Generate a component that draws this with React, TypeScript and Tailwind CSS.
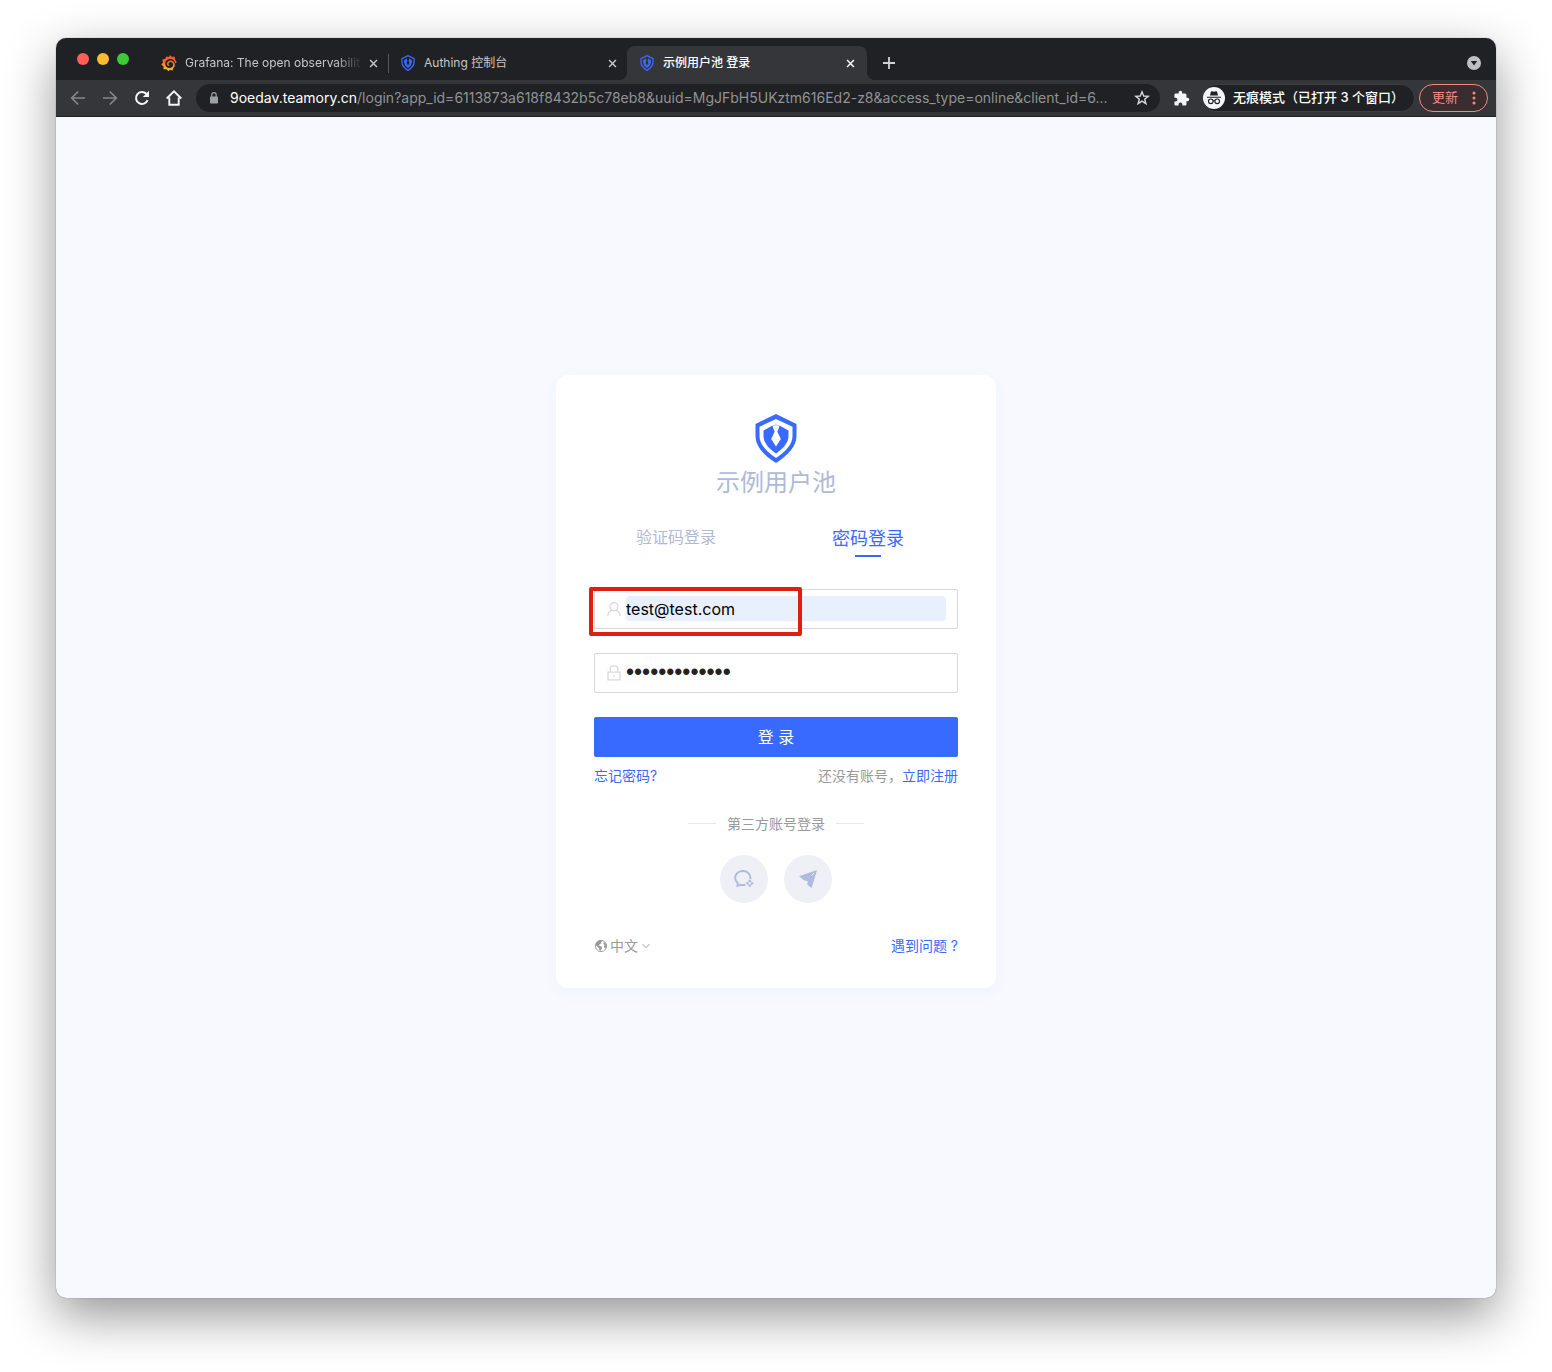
import React from "react";

function Shield({ className }: { className: string }) {
  return (
    <svg viewBox="0 0 42 49" className={className} aria-hidden="true">
      <path d="M21 0 41.500 10V22C41.500 32 33.500 41 21 49 8.500 41 .5 32 .5 22V10Z" fill="#396aff" />
      <path d="M21 5 37.500 12.800V22C37.500 30 31 37.500 21 44 11 37.500 4.500 30 4.500 22V12.800Z" fill="#fff" />
      <path d="M17.600 11.500 8.500 16.500V22C8.500 28.500 13.500 34.500 21 39.500 28.500 34.500 33.500 28.500 33.500 22V16.500L24.400 11.500Z" fill="#396aff" />
      <path d="M17.300 10.800a6 6 0 0 1 7.400 0L23.400 15.500 22.300 17.500 25.800 25 21 32.500 16.200 25 19.700 17.500 18.600 15.500Z" fill="#fff" />
      <path d="M18 11.900Q21 9.600 24 11.900" fill="none" stroke="#9db5ff" strokeWidth="0.800" />
    </svg>
  );
}

function ShieldSmall() {
  return (
    <svg viewBox="0 0 42 49" className="h-4 w-3.5 shrink-0" aria-hidden="true">
      <path d="M21 2 39.500 11V22C39.500 31 32.500 39.500 21 47 9.500 39.500 2.500 31 2.500 22V11Z" fill="none" stroke="#396aff" strokeWidth="4" />
      <path d="M17 11 9 16V22C9 28.500 14 34.500 21 39.500 28 34.500 33 28.500 33 22V16L25 11 23 17 25.500 25 21 32 16.500 25 19 17Z" fill="#396aff" />
    </svg>
  );
}

function GrafanaIcon() {
  return (
    <svg viewBox="0 0 32 32" className="size-4 shrink-0" aria-hidden="true">
      <defs>
        <linearGradient id="grafana" x1="0" y1="0" x2="0" y2="1">
          <stop offset="0" stopColor="#f0512b" />
          <stop offset="0.450" stopColor="#f4702a" />
          <stop offset="1" stopColor="#fcc827" />
        </linearGradient>
      </defs>
      <path
        fill="url(#grafana)"
        d="M18 0 21.500 3.500 27.500 3.500 28 9 31.500 14 29 17A10 10 0 0 0 18.500 8.200C12.500 8.200 8.500 12.500 8.500 17.500 8.500 22.800 12.500 26.200 17 26.200 21.500 26.200 24.300 23 24.300 19.500 24.300 16 21.800 14 19.200 14 16.800 14 15 15.800 15 17.800 15 19.500 16.200 20.500 17.600 20.700 16 22.800 12 21.500 12 17.600 12 13.800 15.200 11 19.200 11 23.800 11 27.600 14.600 27.600 19.600 27.600 23 26 25.500 24 27.200L23.500 31 18.500 29.500 14.500 32 11 28.300 5 28.500 5 23 .5 19 4 15 2.500 9 8 8 11 3 15.500 4.200Z"
      />
    </svg>
  );
}

function Cross({ className }: { className: string }) {
  return (
    <svg viewBox="0 0 10 10" className={className} aria-hidden="true">
      <path d="M1.200 1.200 8.800 8.800M8.800 1.200 1.200 8.800" stroke="currentColor" strokeWidth="1.600" />
    </svg>
  );
}

function Tab({ icon, title, active = false, first = false }: { icon: React.ReactNode; title: string; active?: boolean; first?: boolean }) {
  return (
    <div
      className={
        active
          ? "relative flex h-[34px] w-60 items-center rounded-t-lg bg-[#35363a] pr-2.5 pl-[13px] text-white"
          : "relative flex h-[34px] w-[239px] items-center pr-2 pl-3 text-[#c6c8cb]"
      }
    >
      {icon}
      <button
        type="button"
        className={
          active
            ? "ml-[9px] min-w-0 flex-1 text-left text-xs font-medium whitespace-nowrap"
            : first
              ? "ml-2 min-w-0 flex-1 [mask-image:linear-gradient(to_right,black_84%,transparent)] text-left text-xs whitespace-nowrap"
              : "ml-2 min-w-0 flex-1 text-left text-xs whitespace-nowrap"
        }
      >
        {title}
      </button>
      <button type="button" aria-label="关闭标签页" className="ml-1 p-0.5">
        <Cross className="size-[9px]" />
      </button>
      {first && <span className="absolute top-2 -right-px h-[19px] w-px bg-[#55575b]" />}
      {active && (
        <>
          <span className="absolute bottom-0 -left-2 size-2 bg-[radial-gradient(circle_at_0_0,transparent_8px,#35363a_8px)]" />
          <span className="absolute -right-2 bottom-0 size-2 bg-[radial-gradient(circle_at_100%_0,transparent_8px,#35363a_8px)]" />
        </>
      )}
    </div>
  );
}

function NavButton({ label, children, dim = false }: { label: string; children: React.ReactNode; dim?: boolean }) {
  return (
    <button
      type="button"
      aria-label={label}
      className={dim ? "flex size-8 items-center justify-center text-[#84868a]" : "flex size-8 items-center justify-center text-[#f4f5f6]"}
    >
      <svg viewBox="0 0 20 20" className="size-5" fill="none" stroke="currentColor" strokeWidth="2" aria-hidden="true">
        {children}
      </svg>
    </button>
  );
}

function BrowserChrome() {
  return (
    <header>
      <div className="flex h-[42px] items-end bg-[#202124]">
        <div className="flex gap-2 self-center pl-[21px]">
          <button type="button" aria-label="关闭" className="size-3 rounded-full bg-[#ff5f57]" />
          <button type="button" aria-label="最小化" className="size-3 rounded-full bg-[#febc2e]" />
          <button type="button" aria-label="缩放" className="size-3 rounded-full bg-[#3ec93b]" />
        </div>
        <div className="ml-5 flex">
          <Tab first icon={<GrafanaIcon />} title="Grafana: The open observabilit" />
          <Tab icon={<span className="flex w-4 justify-center"><ShieldSmall /></span>} title="Authing 控制台" />
          <Tab active icon={<span className="flex w-3.5 justify-center"><ShieldSmall /></span>} title="示例用户池 登录" />
        </div>
        <button type="button" aria-label="新标签页" className="ml-4 flex h-[34px] items-center text-[#d0d2d5]">
          <svg viewBox="0 0 12 12" className="size-3" aria-hidden="true">
            <path d="M6 0V12M0 6H12" stroke="currentColor" strokeWidth="1.800" />
          </svg>
        </button>
        <button type="button" aria-label="搜索标签页" className="mr-[15px] ml-auto flex h-[34px] items-center">
          <svg viewBox="0 0 14 14" className="size-3.5" aria-hidden="true">
            <circle cx="7" cy="7" r="7" fill="#bdc1c6" />
            <path d="M3.800 5H10.200L7 9.500Z" fill="#202124" />
          </svg>
        </button>
      </div>
      <div className="flex h-[37px] items-center border-b border-[#202124] bg-[#35363a] pr-2 pl-1.5">
        <NavButton label="后退" dim>
          <path d="M17 10H4M10.200 3.500 3.700 10l6.500 6.500" strokeWidth="1.700" />
        </NavButton>
        <NavButton label="前进" dim>
          <path d="M3 10H16M9.800 3.500 16.300 10l-6.500 6.500" strokeWidth="1.700" />
        </NavButton>
        <NavButton label="重新加载">
          <path d="M15.600 12.200A6 6 0 1 1 14.300 5.800L16 7.500" />
          <path d="M17 2.800V9H10.800Z" fill="currentColor" stroke="none" />
        </NavButton>
        <NavButton label="主页">
          <path d="M2.700 10.500 10 3.300l7.300 7.200M5.300 9.500V16.800H14.700V9.500" strokeWidth="1.900" />
        </NavButton>
        <div className="ml-1.5 flex h-7 min-w-0 flex-1 items-center rounded-full bg-[#202124] pr-2.5 pl-3.5">
          <svg viewBox="0 0 8 12" className="h-3 w-2 shrink-0" aria-hidden="true">
            <rect x="0" y="4.500" width="8" height="7" rx="0.800" fill="#9aa0a6" />
            <path d="M1.800 5V2.900a2.200 2.200 0 0 1 4.400 0V5" fill="none" stroke="#9aa0a6" strokeWidth="1.200" />
          </svg>
          <p className="ml-3 min-w-0 flex-1 truncate text-sm text-[#919396]">
            <span className="text-white">9oedav.teamory.cn</span>
            /login?app_id=6113873a618f8432b5c78eb8&amp;uuid=MgJFbH5UKztm616Ed2-z8&amp;access_type=online&amp;client_id=6...
          </p>
          <button type="button" aria-label="为此标签页添加书签" className="ml-3 shrink-0">
            <svg viewBox="0 0 16 16" className="size-4" fill="none" stroke="#d5d7da" strokeWidth="1.400" aria-hidden="true">
              <path d="M8 1.800 9.700 6 14.200 6.300 10.700 9.200 11.900 13.700 8 11.200 4.100 13.700 5.300 9.200 1.800 6.300 6.300 6Z" />
            </svg>
          </button>
        </div>
        <button type="button" aria-label="扩展程序" className="flex w-[42px] shrink-0 items-center justify-center pl-px">
          <svg viewBox="0 0 24 24" className="size-[17px]" fill="#f4f5f6" aria-hidden="true">
            <path d="M20.500 11H19V7a2 2 0 0 0-2-2h-4V3.500a2.500 2.500 0 0 0-5 0V5H4a2 2 0 0 0-2 2v3.800h1.500a2.700 2.700 0 0 1 0 5.400H2V20a2 2 0 0 0 2 2h3.800v-1.500a2.700 2.700 0 0 1 5.400 0V22H17a2 2 0 0 0 2-2v-4h1.500a2.500 2.500 0 0 0 0-5Z" />
          </svg>
        </button>
        <div className="flex h-7 w-[213px] shrink-0 items-center rounded-full border border-[#3d3e42] bg-[#202124] text-[13px] font-medium whitespace-nowrap text-white">
          <svg viewBox="0 0 22 22" className="size-[22px] shrink-0" aria-hidden="true">
            <circle cx="11" cy="11" r="11" fill="#f4f5f6" />
            <path d="M7 8.500 7.900 4.700Q8.200 4 9 4.300L11 4.800 13 4.300Q13.800 4 14.100 4.700L15 8.500ZM4 9.700H18V10.800H4Z" fill="#202124" />
            <g fill="none" stroke="#202124" strokeWidth="1.100">
              <circle cx="7.800" cy="14.300" r="2.300" />
              <circle cx="14.200" cy="14.300" r="2.300" />
              <path d="M10.100 14Q11 13.300 11.900 14" />
            </g>
          </svg>
          <span className="ml-2">无痕模式（已打开 3 个窗口）</span>
        </div>
        <button
          type="button"
          className="ml-1 flex h-7 w-[69px] shrink-0 items-center justify-between rounded-full border border-[#f28b82] bg-[#3a2d30] pr-[11px] pl-3 text-[13px] text-[#f28b82]"
        >
          更新
          <svg viewBox="0 0 4 14" className="h-3.5 w-1" fill="currentColor" aria-hidden="true">
            <circle cx="2" cy="2" r="1.500" />
            <circle cx="2" cy="7" r="1.500" />
            <circle cx="2" cy="12" r="1.500" />
          </svg>
        </button>
      </div>
    </header>
  );
}

function LoginCard() {
  return (
    <section className="w-full max-w-[440px] rounded-xl bg-white px-[38px] pt-[39px] pb-8 shadow-[0_4px_16px_rgba(57,106,255,0.04)]">
      <Shield className="mx-auto h-[49px] w-[42px]" />
      <h1 className="text-center text-2xl leading-10 font-normal text-[#afbad7]">示例用户池</h1>
      <div role="tablist" className="mt-5 flex items-start justify-between pr-[54px] pl-[42px]">
        <button type="button" role="tab" aria-selected="false" className="text-base leading-7 text-[#afbad7]">
          验证码登录
        </button>
        <button type="button" role="tab" aria-selected="true" className="flex flex-col items-center text-lg leading-8 text-[#396aff]">
          密码登录
          <span className="h-0.5 w-[26px] bg-[#396aff]" />
        </button>
      </div>
      <form className="mt-8" onSubmit={(e) => e.preventDefault()}>
        <div className="relative flex h-10 items-center rounded-[2px] border border-[#d9d9d9] pr-[11px] pl-3">
          <svg viewBox="0 0 14 14" className="size-3.5 shrink-0" fill="none" stroke="#d9d9d9" strokeWidth="1.300" aria-hidden="true">
            <circle cx="7" cy="4.600" r="4" />
            <path d="M.8 13.800C1 10.500 3 8.800 5 8.200M13.200 13.800C13 10.500 11 8.800 9 8.200" />
          </svg>
          <input
            type="text"
            aria-label="账号"
            defaultValue="test@test.com"
            className="ml-[5px] h-[25px] min-w-0 flex-1 rounded bg-[#e8f0fe] text-base text-black outline-none"
          />
          <span className="pointer-events-none absolute -top-[3px] -left-1.5 h-[49px] w-[213px] rounded-[2px] border-4 border-[#e01e10]" />
        </div>
        <div className="mt-6 flex h-10 items-center rounded-[2px] border border-[#d9d9d9] pr-[11px] pl-3">
          <svg viewBox="0 0 14 16" className="h-4 w-3.5 shrink-0" fill="none" stroke="#d9d9d9" strokeWidth="1.300" aria-hidden="true">
            <path d="M1 7.200H13V14.800H1ZM3.300 7V3.500Q3.300 1.200 5.500 1.200H8.500Q10.700 1.200 10.700 3.500V7M7 9.800V12" />
          </svg>
          <input
            type="password"
            aria-label="密码"
            defaultValue="1234567890123"
            className="ml-[5px] h-[25px] min-w-0 flex-1 font-['Liberation_Sans',sans-serif] text-[23px] text-[#222] outline-none"
          />
        </div>
        <button type="submit" className="mt-6 h-10 w-full rounded-[2px] bg-[#396aff] text-base text-white">
          登 录
        </button>
        <div className="mt-[9px] flex justify-between text-sm leading-5">
          <a href="#forgot" className="text-[#396aff]">忘记密码?</a>
          <p className="text-[#999]">
            还没有账号，<a href="#register" className="text-[#396aff]">立即注册</a>
          </p>
        </div>
      </form>
      <div className="mt-7 flex items-center justify-center gap-[11px] text-sm leading-5 text-[#999]">
        <span className="h-px w-7 bg-[#e8e8e8]" />
        第三方账号登录
        <span className="h-px w-7 bg-[#e8e8e8]" />
      </div>
      <div className="mt-[21px] flex justify-center gap-4">
        <button type="button" aria-label="企业微信登录" className="flex size-12 items-center justify-center rounded-full bg-[#eff0f5]">
          <svg viewBox="0 0 20 18" className="h-[18px] w-5" fill="none" stroke="#afbbdc" aria-hidden="true">
            <path d="M16.300 9A7.600 6.900 0 1 0 3.700 13L3.500 15.900 6.600 14.800Q8.500 15.300 11.500 14.800" strokeWidth="1.900" />
            <path d="M15.800 9.500Q16.300 12.500 19.400 13.200 16.300 13.900 15.800 17 15.200 13.900 12.200 13.200 15.200 12.500 15.800 9.500Z" strokeWidth="1.200" />
          </svg>
        </button>
        <button type="button" aria-label="飞书登录" className="flex size-12 items-center justify-center rounded-full bg-[#eff0f5]">
          <svg viewBox="0 0 18 18" className="size-[18px]" aria-hidden="true">
            <path d="M0 6.200 18 0 12.700 18 8.300 14.700 8.600 10.900 5.300 10.500Z" fill="#afbbdc" />
            <path d="M12.300 5.600 15 3" stroke="#eff0f5" strokeWidth="1" />
          </svg>
        </button>
      </div>
      <footer className="mt-[33px] flex items-center justify-between text-sm leading-5">
        <button type="button" className="flex items-center text-[#999]">
          <svg viewBox="0 0 14 14" className="mr-0.5 size-3.5" aria-hidden="true">
            <circle cx="7" cy="7" r="5.600" fill="none" stroke="#999" strokeWidth="0.900" />
            <path d="M1.500 5.500C2 3.300 4 1.400 6.500 1.300L8.600 2 7 3.200 7.400 4.500 5.600 5.200 5 6.800 7.400 7.600 8.300 9.200 6.800 10.800 6.500 12.600C5.500 12 5.200 10.300 5 9L3 7.500ZM10 3 12.200 5 12.600 8 11 9.800 9.900 7.500 10.600 6 9.200 4.800Z" fill="#999" />
          </svg>
          中文
          <svg viewBox="0 0 8 6" className="ml-1 h-1.5 w-2" fill="none" stroke="#999" aria-hidden="true">
            <path d="M.6 1.200 4 4.600 7.400 1.200" />
          </svg>
        </button>
        <a href="#help" className="text-[#396aff]">遇到问题 ?</a>
      </footer>
    </section>
  );
}

export default function App() {
  return (
    <div className="flex min-h-screen flex-col bg-white px-14 pt-[38px] pb-[74px] font-[Inter,'Noto_Sans_CJK_SC',sans-serif]">
      <div className="flex flex-1 flex-col overflow-hidden rounded-[10px] bg-[#f7f9ff] shadow-[0_0_1px_rgba(0,0,0,0.6),0_18px_50px_rgba(0,0,0,0.42)]">
        <BrowserChrome />
        <main className="flex flex-1 items-center justify-center pb-[53px]">
          <LoginCard />
        </main>
      </div>
    </div>
  );
}
